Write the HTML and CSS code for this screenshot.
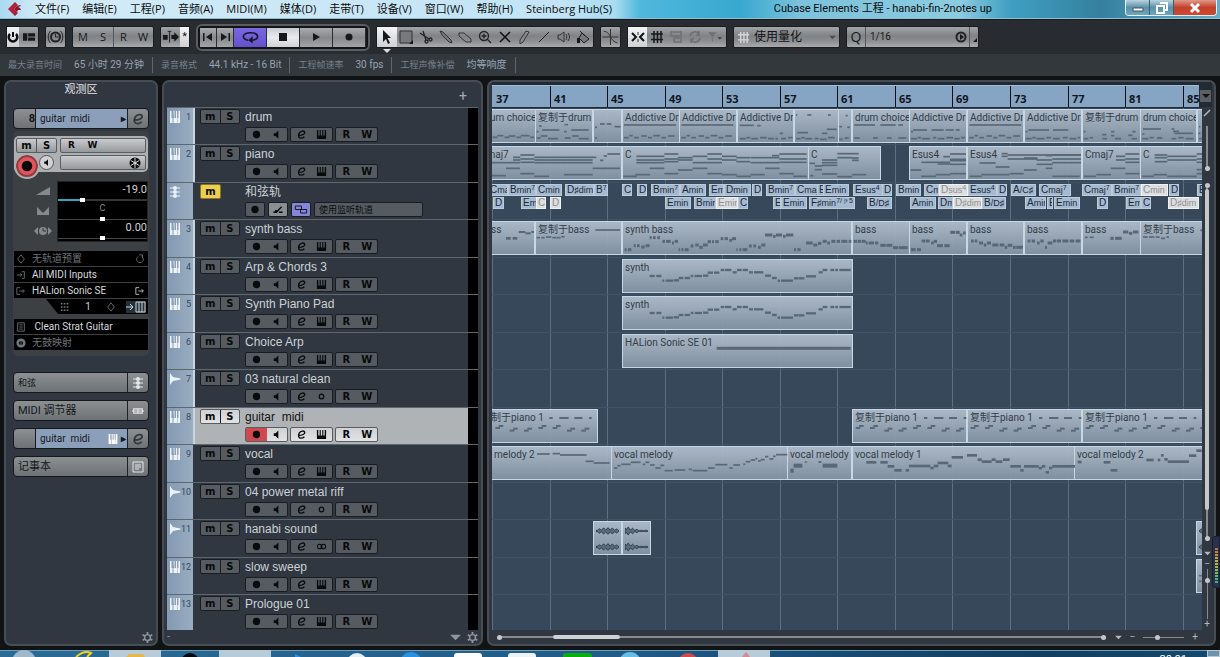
FILE: index.html
```html
<!DOCTYPE html>
<html lang="zh-CN">
<head>
<meta charset="utf-8">
<title>Cubase Elements 工程 - hanabi-fin-2notes up</title>
<link rel="stylesheet" href="styles.css">
</head>
<body>
<svg class="defs" aria-hidden="true">
  <symbol id="rec" viewBox="0 0 12 12"><circle cx="6" cy="6" r="4"/></symbol>
  <symbol id="mon" viewBox="0 0 12 12"><path d="M3 4.500h2L8 1.500v9L5 7.500H3z"/></symbol>
  <symbol id="edit" viewBox="0 0 12 12"><path d="M2.500 7C7 7 10 5.500 9.500 3.500 9 1.500 5 2 3.500 4.500 2 7.500 3 10 5.500 10c1.500 0 2.700-.6 3.700-1.500" fill="none" stroke="currentColor" stroke-width="1.500"/></symbol>
  <symbol id="keys" viewBox="0 0 12 12"><path d="M1 1v10h10V1H9.500v6H8V1H6.800v6H5.200V1H4v6H2.500V1z"/></symbol>
  <symbol id="piano" viewBox="0 0 12 12"><path d="M1 0h1.500v7h1v5H1zM4.500 0h1v7h.5V7h1V0h1v7h.5v5h-4V7h.5zM9.500 0H11v12H9V7h.5z"/></symbol>
  <symbol id="wave" viewBox="0 0 12 12"><path d="M1 0l3 4 7.500 1.500v1L4 8l-3 4z"/></symbol>
  <symbol id="mono" viewBox="0 0 12 12"><circle cx="6" cy="6" r="2.500" fill="none" stroke="currentColor" stroke-width="1.300"/></symbol>
  <symbol id="stereo" viewBox="0 0 12 12"><g fill="none" stroke="currentColor" stroke-width="1.200"><circle cx="4" cy="6" r="2.500"/><circle cx="8" cy="6" r="2.500"/></g></symbol>
  <symbol id="chord" viewBox="0 0 12 12"><path d="M1 2h10M1 6h10M1 10h10" stroke="currentColor" fill="none"/><circle cx="6" cy="2" r="2"/><circle cx="6" cy="6" r="2"/><circle cx="6" cy="10" r="2"/></symbol>
  <symbol id="voice" viewBox="0 0 12 12"><path d="M1 9h3l6-6M7 9h4" stroke="currentColor" fill="none" stroke-width="1.400"/><circle cx="4" cy="8" r="1.500"/></symbol>
  <symbol id="link" viewBox="0 0 16 12"><path d="M1.500 2h7v4h-7zM7.500 6h7v4h-7z" stroke="currentColor" fill="none"/></symbol>
  <symbol id="gear" viewBox="0 0 12 12"><circle cx="6" cy="6" r="3.200" fill="none" stroke="currentColor" stroke-width="1.500"/><path d="M6 0v2.500M6 9.500V12M.8 3l2.200 1.300M9 7.700 11.200 9M.8 9 3 7.700M9 4.300 11.200 3" stroke="currentColor" stroke-width="2"/></symbol>
  <symbol id="down" viewBox="0 0 8 6"><path d="M0 1h8L4 5z"/></symbol>
  <symbol id="grid" viewBox="0 0 14 14"><path d="M1 4h12M1 9.500h12M4 1v12M7.500 1v12M11 1v12" stroke="currentColor" stroke-width="1.500" fill="none"/></symbol>
</svg>

<header class="titlebar">
  <nav class="menu" aria-label="主菜单">
    <svg class="logo" viewBox="0 0 14 14"><path d="M7 0 0 7l7 7 3-3-4-4 4-4z" fill="#b3203a"/><path d="m9 4-3 3 3 3 1-2h3l-1-2-2-1 3-1-1-1z" fill="#8c1830"/></svg>
    <a href="#file">文件(F)</a><a href="#edit">编辑(E)</a><a href="#project">工程(P)</a><a href="#audio">音频(A)</a><a href="#midi">MIDI(M)</a><a href="#media">媒体(D)</a><a href="#transport">走带(T)</a><a href="#devices">设备(V)</a><a href="#window">窗口(W)</a><a href="#help">帮助(H)</a><a href="#hub">Steinberg Hub(S)</a>
  </nav>
  <h1>Cubase Elements 工程 - hanabi-fin-2notes up</h1>
  <div class="winbtns">
    <button aria-label="最小化"><svg viewBox="0 0 14 12"><path d="M2 6h10v3H2z" fill="#fff" stroke="#456"/></svg></button>
    <button aria-label="还原"><svg viewBox="0 0 14 12"><path d="M5 1h7v7h-2M2 4h7v7H2z" fill="none" stroke="#fff" stroke-width="2"/></svg></button>
    <button class="close" aria-label="关闭"><svg viewBox="0 0 14 12"><path d="m3 2 8 8m0-8-8 8" stroke="#fff" stroke-width="3"/></svg></button>
  </div>
</header>

<div class="toolbar">
  <div class="group">
    <button class="w12 on" aria-label="激活工程"><svg viewBox="0 0 12 12"><path d="M3 3a4.300 4.300 0 1 0 6 0" fill="none" stroke="#111" stroke-width="2.500"/><path d="M6 1v5" stroke="#111" stroke-width="2"/></svg></button>
    <button class="w20" aria-label="窗口布局"><svg viewBox="0 0 14 12"><path d="M0 1.500h5v9H0zM6 1.500h8v4H6zM6 6.500h8v4H6z"/></svg></button>
  </div>
  <div class="group"><button class="w20" aria-label="延迟补偿"><svg class="big" viewBox="0 0 16 16"><g fill="none" stroke="#222"><circle cx="8" cy="8" r="4.500" stroke-width="2"/><path d="M8 5v3h3M3 2C0 5 0 11 3 14M13 2c3 3 3 9 0 12"/></g></svg></button></div>
  <div class="group letters"><button>M</button><button>S</button><button class="div">R</button><button>W</button></div>
  <div class="group">
    <button class="w20" aria-label="自动滚动"><svg class="big" viewBox="0 0 18 16"><path d="M1 6h5v5H1zM10 6h3V3l5 5-5 5v-3h-3z"/><path d="M8 2v12M6 2h4" stroke="#222" fill="none"/></svg></button>
    <button class="w8 on">*</button>
  </div>
  <div class="transport">
    <button class="w18" aria-label="上一个标记"><svg viewBox="0 0 12 12"><path d="M1 2h1.500v8H1zM10 2v8L4 6z"/></svg></button>
    <button class="w18" aria-label="下一个标记"><svg viewBox="0 0 12 12"><path d="M9.500 2H11v8H9.500zM2 2v8l6-4z"/></svg></button>
    <button class="cycle" aria-label="循环"><svg class="big" viewBox="0 0 16 14"><path d="M6 10C-1 9 0 3 8 3s9 6 2 7H8" fill="none" stroke="#191535" stroke-width="1.500"/><path d="m10 6-4 4 4 3z"/></svg></button>
    <button class="on" aria-label="停止"><svg viewBox="0 0 12 12"><path d="M2 2h8v8H2z"/></svg></button>
    <button aria-label="播放"><svg viewBox="0 0 12 12"><path d="M3 2v8l7-4z"/></svg></button>
    <button aria-label="录音"><svg viewBox="0 0 12 12"><circle cx="6" cy="6" r="3.500"/></svg></button>
  </div>
  <div class="group tools">
    <button class="on" aria-label="对象选择"><svg viewBox="0 0 14 14"><path d="m3 0 8 8H7.500L10 13l-2 1-2-5-3 3z"/></svg><i></i></button>
    <button aria-label="范围选择"><svg viewBox="0 0 14 14"><path d="M1 1h12v12H1z" fill="#77797c" stroke="#333"/><path d="M14 10v4h-4z"/></svg></button>
    <button aria-label="分割"><svg viewBox="0 0 14 14"><g fill="none" stroke="#222" stroke-width="1.300"><path d="m1 3 9 6M4 1l3 9"/><circle cx="7.500" cy="11.500" r="1.500"/><circle cx="11.500" cy="9.500" r="1.500"/></g></svg></button>
    <button aria-label="胶合"><svg viewBox="0 0 14 14"><path d="m1 1 3 1 8 8 1 3-3-1-7-7z" fill="#777" stroke="#333"/></svg></button>
    <button aria-label="擦除"><svg viewBox="0 0 14 14"><path d="M1 3h5l7 6v3H8L1 6z" fill="none" stroke="#333"/></svg></button>
    <button aria-label="缩放"><svg viewBox="0 0 14 14"><g fill="none" stroke="#222" stroke-width="1.300"><circle cx="6" cy="6" r="4.500"/><path d="M3.500 6h5M6 3.500v5M9 9l4 4"/></g></svg></button>
    <button aria-label="静音"><svg viewBox="0 0 14 14"><path d="m2 2 10 10m0-10L2 12" stroke="#111" stroke-width="1.500"/></svg></button>
    <button aria-label="绘制"><svg viewBox="0 0 14 14"><path d="m9 1 3 1-6 10-3 2V10z" fill="none" stroke="#333"/></svg></button>
    <button aria-label="直线"><svg viewBox="0 0 14 14"><path d="M2 12 12 2" stroke="#222"/></svg></button>
    <button aria-label="播放工具"><svg viewBox="0 0 14 14"><g fill="none" stroke="#333"><path d="M1 5h2l4-3v10L3 9H1zM9 4c1 2 1 4 0 6M11 3c2 3 2 5 0 8"/></g></svg></button>
    <button aria-label="颜色"><svg viewBox="0 0 14 14"><path d="m6 3 7 6-5 4-5-5zM4 1l5 5" fill="#777" stroke="#222"/><path d="M1 8h3v5H1z"/></svg></button>
  </div>
  <div class="group"><button class="w20" aria-label="吸附到零交叉"><svg class="big" viewBox="0 0 16 16"><path d="M8 0v16M0 8h16M1 2c5 1 6 4 7 6s3 5 7 6" fill="none" stroke="#333"/></svg></button></div>
  <div class="group snap">
    <button class="on" aria-label="吸附"><svg viewBox="0 0 14 14"><path d="m1 3 4 4-4 4M13 3 9 7l4 4" fill="none" stroke="#111" stroke-width="2"/><path d="M7 2v3m0 4v3" stroke="#333"/></svg></button>
    <button aria-label="网格"><svg><use href="#grid"/></svg></button>
    <button class="dim" aria-label="事件吸附"><svg viewBox="0 0 14 14"><path d="M2 2h10v4H2zM5 8h7v4H5z" fill="none" stroke="currentColor" stroke-width="1.500"/></svg></button>
    <button class="dim" aria-label="洗牌"><svg viewBox="0 0 14 14"><path d="M2 6a5 5 0 0 1 9-2M12 8a5 5 0 0 1-9 2M11 1v4H8M3 13V9h3" fill="none" stroke="currentColor" stroke-width="1.500"/></svg></button>
    <button class="dim" aria-label="吸附类型"><svg viewBox="0 0 16 14"><path d="M1 2h8L5 6zM5 4v8" stroke="currentColor"/><path d="M11 7h5l-2.500 3z" fill="#444"/></svg></button>
  </div>
  <div class="group quant">
    <svg class="gridico"><use href="#grid"/></svg>
    <select aria-label="网格类型"><option>使用量化</option></select>
    <svg class="arrow"><use href="#down"/></svg>
  </div>
  <div class="group q">
    <label for="quantize">Q</label>
    <select id="quantize"><option>1/16</option></select>
    <button class="w18" aria-label="应用量化"><svg viewBox="0 0 12 12"><circle cx="6" cy="6" r="4.500" fill="none" stroke="#222" stroke-width="2"/><path d="M5 3v6l4-3z"/></svg></button>
    <button class="w8 div" aria-label="量化面板"><svg viewBox="0 0 8 12"><path d="M7 7v4H3z"/></svg></button>
  </div>
</div>

<dl class="info">
  <div><dt>最大录音时间</dt><dd>65 小时 29 分钟</dd></div>
  <div><dt>录音格式</dt><dd>44.1 kHz - 16 Bit</dd></div>
  <div><dt>工程帧速率</dt><dd>30 fps</dd></div>
  <div><dt>工程声像补偿</dt><dd>均等响度</dd></div>
</dl>

<main class="work">
  <aside class="panel inspector">
    <h2>观测区</h2>
    <div class="bar track">
      <span class="num">8</span><button class="name">guitar&nbsp; midi<b>▸</b></button><button class="end" aria-label="编辑"><svg><use href="#edit"/></svg></button>
    </div>
    <section class="channel">
      <div class="strip">
        <div class="ms"><button>m</button><button>S</button></div>
        <div class="rw"><button>R</button><button>W</button></div>
        <div class="round"><button class="record" aria-label="录音启用"><svg><use href="#rec"/></svg></button><button class="monitor" aria-label="监听"><svg><use href="#mon"/></svg></button></div>
        <div class="rw freeze"><button aria-label="冻结"><svg viewBox="0 0 12 12"><circle cx="6" cy="6" r="5.500"/><path d="M6 1v10M1.700 3.500l8.600 5M1.700 8.500l8.600-5" stroke="#ccc"/><circle cx="6" cy="6" r="1.500" fill="#ccc"/></svg></button></div>
      </div>
      <div class="faders">
        <div class="labels">
          <svg viewBox="0 0 18 12"><path d="M2 10 16 2v8z"/></svg>
          <svg viewBox="0 0 18 12"><path d="M3 2l6 6 6-6v8H3z"/></svg>
          <svg viewBox="0 0 18 12"><path d="M4 2v8L0 6zM14 2v8l4-4z"/><circle cx="9" cy="6" r="4"/><path d="M9 3v3h3" stroke="#333" fill="none"/></svg>
        </div>
        <div class="values">
          <label>-19.0<input class="vol" type="range" value="26" aria-label="音量"></label>
          <label class="pan">C<input type="range" value="50" aria-label="声像"></label>
          <label>0.00<input type="range" value="50" aria-label="延迟"></label>
        </div>
      </div>
      <ul class="routes">
        <li class="off"><svg viewBox="0 0 12 12"><path d="m6 1 4 5-4 5-4-5z"/></svg><span>无轨道预置</span><svg viewBox="0 0 12 12"><path d="M8 3a4 4 0 1 1-4 0M5 1h4v4"/></svg></li>
        <li><svg viewBox="0 0 12 12"><path d="M1 6h6M5 4l2 2-2 2M7 2h3v8H7"/></svg><span>All MIDI Inputs</span></li>
        <li><svg viewBox="0 0 12 12"><path d="M5 2H1v8h4M4 6h6M8 4l2 2-2 2"/></svg><span>HALion Sonic SE</span><svg class="lit" viewBox="0 0 12 12"><path d="M5 2H1v8h4M4 6h6M8 4l2 2-2 2"/></svg></li>
      </ul>
      <div class="midich"><svg viewBox="0 0 12 12"><path d="M1 2h9M1 6h9M1 10h9" stroke-dasharray="2 1.500" stroke-width="1.800"/></svg><span>1</span><svg viewBox="0 0 12 12"><path d="m6 1 4 5-4 5-4-5z"/></svg><svg class="lit wide" viewBox="0 0 20 12"><path d="M0 6h6M4 3l3 3-3 3M10 1h9v10h-9zM13 1v10M16 1v10"/></svg></div>
      <ul class="routes">
        <li><svg viewBox="0 0 12 12"><path d="M2 1h8v10H2zM4 3.500h4M4 6h4M4 8.500h4"/></svg><span>&nbsp;Clean Strat Guitar</span></li>
        <li class="off"><svg viewBox="0 0 12 12"><circle cx="6" cy="6" r="4" stroke-width="3"/><path d="M6 3v7"/></svg><span>无鼓映射</span></li>
      </ul>
    </section>
    <div class="bar"><button class="title small">和弦</button><button class="end white" aria-label="和弦"><svg><use href="#chord"/></svg></button></div>
    <div class="bar"><button class="title">MIDI 调节器</button><button class="end white" aria-label="调节器"><svg viewBox="0 0 14 12"><path d="M0 6h14M2 3.500h10v5H2zM7 3.500v5" fill="none" stroke="currentColor" stroke-width="1.300"/></svg></button></div>
    <div class="bar track"><span class="num"></span><button class="name">guitar&nbsp; midi<svg class="mini"><use href="#piano"/></svg><b>▸</b></button><button class="end" aria-label="编辑"><svg><use href="#edit"/></svg></button></div>
    <div class="bar"><button class="title">记事本</button><button class="end white" aria-label="记事本"><svg viewBox="0 0 12 12"><path d="M1 1h10v10H1zM3 4h6M3 6h6M3 8h4" fill="none" stroke="currentColor"/></svg></button></div>
    <footer><button aria-label="设置"><svg><use href="#gear"/></svg></button></footer>
  </aside>

  <section class="panel tracks" aria-label="轨道列表">
    <div class="head"><button aria-label="添加轨道">+</button></div>
    <div class="rows" id="rows"></div>
    <footer><span>-</span><button aria-label="缩放"><svg class="tri"><use href="#down"/></svg></button><button aria-label="设置"><svg><use href="#gear"/></svg></button></footer>
  </section>

  <section class="panel arrange" aria-label="工程窗口">
    <div class="ruler"><div class="bars" id="bars"></div><button aria-label="标尺选项"><svg><use href="#down"/></svg></button></div>
    <div class="canvas"><div class="lines" id="lines"></div><div id="lanes"></div></div>
    <div class="vscroll">
      <svg class="slash" viewBox="0 0 8 8"><path d="M1 7 7 1" stroke="currentColor" stroke-width="1.500"/></svg>
      <div class="vsplit"></div>
      <div class="vbar"><i></i></div>
      <svg class="tri"><use href="#down"/></svg>
      <span>−</span>
      <input type="range" value="20" aria-label="垂直缩放">
      <span>+</span>
    </div>
    <div class="hscroll">
      <div class="hbar"><i></i></div>
      <svg class="tri"><use href="#down"/></svg>
      <span>−</span><input type="range" value="32" aria-label="水平缩放"><span>+</span>
    </div>
  </section>
  <div class="meter" aria-hidden="true"><i></i></div>
</main>

<footer class="taskbar">
  <svg viewBox="0 0 780 7" aria-hidden="true">
    <circle cx="24" cy="12" r="12" fill="#9fb9cc"/><path d="M76 7q8-7 15-4l-4 4" fill="none" stroke="#f0d020" stroke-width="2"/>
    <path d="M109 0h52v7h-52zM219 0h52v7h-52zM718 0h52v7h-52z" fill="#b8cbd9"/><path d="M126 7l3-3h14l2 3z" fill="#e5b64a"/>
    <circle cx="190" cy="12" r="9" fill="#05080c"/><path d="m295 4 6 3h-6z" fill="#2c8fe8"/><circle cx="357" cy="13" r="10" fill="#e8f0f5"/><circle cx="411" cy="13" r="11" fill="#2a90e0"/>
    <rect x="454" y="3" width="28" height="8" rx="3" fill="#fff"/><rect x="508" y="3" width="28" height="8" rx="3" fill="#eef3f6"/><rect x="563" y="3" width="29" height="8" rx="3" fill="#0aae0a"/>
    <circle cx="630" cy="13" r="11" fill="#67bfe6"/><circle cx="688" cy="13" r="10" fill="#d04a4a"/><path d="m742 7 4-5 4 5z" fill="#d58a90"/>
  </svg>
  <time>20:01</time><button aria-label="显示桌面"></button>
</footer>
<script src="app.js"></script>
</body>
</html>
```

FILE: styles.css
```css
* { box-sizing: border-box; }
body {
  margin: 0;
  min-height: 100vh;
  display: flex;
  flex-direction: column;
  overflow: hidden;
  background: #111315;
  color: #c9d0d6;
  font: 11px/14px Roboto, "Noto Sans CJK SC", sans-serif;
}
button, select, input { font: inherit; color: inherit; margin: 0; padding: 0; border: 0; background: none; min-width: 0; }
button { display: flex; align-items: center; justify-content: center; }
ul, dl, dd, h1, h2 { margin: 0; padding: 0; }
ul { list-style: none; }
a { color: inherit; text-decoration: none; }
svg { width: 12px; height: 12px; fill: currentColor; flex: none; display: block; }
.defs { position: absolute; width: 0; height: 0; }

/* title bar */
.titlebar {
  display: flex;
  height: 19px;
  align-items: center;
  background: linear-gradient(to right, #a9daf2 0, #d3ebf7 40px, #c2e4f6 560px, #a8dcf0 615px, #4fb8dc 640px, #37a8cf 740px, #7cc2dc 800px, #8ccce0 960px, #3f9fc2 1010px, #35809e 1100px, #64aecb);
  border-bottom: 1px solid #8ebdd0;
  color: #0c0c0c;
  font: 11px/18px "Open Sans", "Noto Sans CJK SC", sans-serif;
}
.menu { display: flex; align-items: center; gap: 13px; padding-left: 8px; flex: 1; white-space: nowrap; }
.logo { width: 14px; height: 14px; }
.titlebar h1 { font: 11px/18px Roboto, "Noto Sans CJK SC", sans-serif; margin-right: 133px; white-space: nowrap; }
.winbtns { display: flex; align-self: flex-start; margin-right: 3px; border: 1px solid #e5f1f6; border-top: 0; border-radius: 0 0 4px 4px; overflow: hidden; }
.winbtns button { width: 24px; height: 15px; background: linear-gradient(#b8d4e0, #5d8fa9 50%, #6fa6bf); border-right: 1px solid #37606f; }
.winbtns svg { width: 14px; }
.winbtns .close { width: 42px; border: 0; background: linear-gradient(#e09a88, #c4402c 50%, #d0492e); }

/* toolbar */
.toolbar { display: flex; align-items: center; height: 35px; padding: 0 6px; gap: 6px; background: #282b2f; color: #16181a; border-top: 1px solid #1b1d20; }
.group { display: flex; height: 22px; background: linear-gradient(#a2a4a7, #808386 45%, #8c8f92 70%, #a8aaac); border: 1px solid #1a1c1e; border-radius: 2px; }
.w8 { width: 9px; } .w12 { width: 12px; } .w18 { width: 17px; } .w20 { width: 19px; }
.on { background: linear-gradient(#f4f4f6, #d0d1d4); }
.big { width: 17px; height: 16px; }
.letters button { width: 20px; font: 11px/20px "Open Sans", sans-serif; }
.div { border-left: 1px solid #55585b; }
.transport { display: flex; height: 27px; padding: 2px; border: 2px solid #5a5d61; border-radius: 6px; background: #131416; }
.transport button { width: 33px; background: linear-gradient(#a9abae, #86898c 50%, #a2a4a7); border-right: 1px solid #2b2d30; }
.transport .w18 { width: 17px; }
.transport .cycle { background: linear-gradient(#7a68e0, #6450cc); }
.transport .on { background: linear-gradient(#c8ccd2, #e8eaee 50%, #cfd2d8); }
.tools { width: 218px; }
.tools button { flex: 1; position: relative; }
.snap button { width: 19px; }
.tools svg, .snap svg { width: 14px; height: 14px; }
.tools i { position: absolute; top: 22px; left: 6px; border: 4px solid transparent; border-top-color: #ddd; border-bottom: 0; }
.snap button:last-child { width: 22px; }
.snap .dim { color: #6d7073; }
.quant { width: 107px; align-items: center; padding: 0 3px; gap: 4px; }
.gridico { color: #d5d8db; width: 13px; height: 13px; }
select { appearance: none; flex: 1; }
.quant select { font-size: 12px; color: #111; }
.arrow { width: 7px; height: 5px; color: #4b4e51; }
.q { width: 133px; }
.q label { width: 19px; font: 14px/20px "Open Sans", sans-serif; text-align: center; border-right: 1px solid #55585b; }
.q select { padding-left: 4px; font: 10px/20px Roboto, sans-serif; }

.info { display: flex; height: 22px; align-items: center; background: #33383c; color: #95a3b3; }
.info div { display: flex; align-items: center; gap: 12px; padding: 0 8px; border-right: 1px solid #5d6770; height: 16px; }
.info dt { font-size: 9px; color: #75828f; }
.info dd { font-size: 10px; }

/* panels */
.work { position: relative; flex: 1; display: flex; gap: 4px; padding: 4px; }
.panel { background: #303740; border: 2px solid #474d54; border-radius: 7px; display: flex; flex-direction: column; }
.panel footer { margin-top: auto; height: 14px; display: flex; align-items: center; justify-content: flex-end; gap: 6px; color: #8e959c; }
.panel footer svg { width: 11px; height: 11px; }

.inspector { width: 154px; padding: 0 7px; }
.inspector footer { margin-right: -4px; }
.inspector h2 { font-size: 11px; font-weight: 400; line-height: 16px; text-align: center; color: #e0e3e6; margin-bottom: 10px; }
.bar { display: flex; height: 21px; margin-top: 7px; border: 1px solid #16181a; border-radius: 4px; overflow: hidden; background: linear-gradient(#8d9093, #6e7275); color: #15181b; }
.bar:nth-of-type(1) { margin-top: 0; }
.title { flex: 1; justify-content: flex-start; padding-left: 4px; font-size: 11px; }
.title.small { font-size: 9px; }
.num { width: 21px; text-align: right; font-weight: 700; line-height: 19px; }
.name { flex: 1; justify-content: flex-start; padding-left: 4px; background: #8b9fba; border-left: 1px solid #16181a; font-size: 10px; }
.name b { margin-left: auto; padding-right: 1px; }
.name .mini { margin-left: auto; color: #fff; background: #adbac9; width: 10px; height: 10px; }
.name .mini + b { margin-left: 3px; }
.end { width: 21px; border-left: 1px solid #1f2225; color: #33373b; }
.end svg { width: 14px; height: 14px; }
.end.white { color: #e4e6e8; }
.end.white svg { width: 12px; height: 12px; }

.channel { margin: 2px 0 9px; padding: 5px 1px; background: #3c4043; border-radius: 5px; }
.strip { display: grid; grid-template-columns: 41px 1fr; gap: 2px 3px; padding: 2px; background: #adb0b3; border-radius: 5px; color: #0a0a0a; height: 36px; }
.strip .ms, .strip .rw { display: flex; height: 15px; border: 1px solid #5b5e61; border-radius: 2px; background: linear-gradient(#c9cbce, #96999c); }
.ms button { flex: 1; font: 700 10px/13px "DejaVu Sans", sans-serif; }
.ms button + button { border-left: 1px solid #555; }
.rw button { width: 21px; font: 700 9px/13px "DejaVu Sans", sans-serif; }
.strip .freeze { justify-content: flex-end; }
.round { display: flex; align-items: flex-start; gap: 1px; }
.record, .monitor { border-radius: 50%; flex: none; }
.record { width: 22px; height: 22px; background: #df565e; border: 2px solid #96383d; outline: 2px solid #adb0b3; }
.record svg { width: 16px; height: 16px; }
.monitor { width: 15px; height: 15px; background: #d0d2d4; border: 1px solid #555; }
.monitor svg { width: 9px; height: 9px; }
.faders { display: flex; margin-top: 9px; padding-left: 20px; }
.labels { display: flex; flex-direction: column; gap: 8px; padding-top: 4px; width: 23px; color: #85898c; }
.labels svg { width: 18px; }
.values { flex: 1; background: #000; border: 1px solid #222; padding-bottom: 2px; }
.values label { display: block; height: 19px; text-align: right; color: #d0d3d6; line-height: 15px; }
.values .pan { text-align: center; color: #858a8e; font-size: 9px; }
input[type=range] { appearance: none; display: block; height: 4px; background: linear-gradient(#444, #444) center / 100% 1px no-repeat; }
input[type=range]::-webkit-slider-thumb { appearance: none; width: 5px; height: 4px; background: #fff; }
.values input { width: 100%; margin-top: 1px; }
.values .vol { background: linear-gradient(to right, #2fa6c0 26%, #333 26%) center / 100% 2px no-repeat; }
.routes { margin-top: 9px; }
.routes li { display: flex; align-items: center; gap: 6px; height: 15px; margin-bottom: 1px; padding: 0 3px 0 2px; background: #000; color: #d6d9dc; font-size: 10px; }
.routes span { flex: 1; }
.routes .off { color: #6e7377; }
.routes svg, .midich svg { width: 10px; height: 10px; fill: none; stroke: #74797d; }
.routes .lit, .midich .lit { stroke: #ccd5da; }
.midich { display: flex; align-items: center; gap: 10px; height: 15px; margin-left: 32px; padding: 0 2px 0 14px; background: #000; clip-path: polygon(0 0, 100% 0, 100% 100%, 12px 100%); font-size: 10px; }
.midich span { flex: 1; text-align: center; }
.midich .wide { width: 20px; height: 12px; background: #22313a; }
.midich + .routes { margin-top: 5px; }

/* track list */
.tracks { width: 321px; padding: 0 3px; }
.head { height: 25px; padding: 5px 11px 0; display: flex; justify-content: flex-end; }
.head button { font-size: 14px; color: #a5abb1; height: 18px; }
.rows { height: 523px; overflow: hidden; }
.row, .lane { height: 37px; }
.row:nth-child(even), .lane:nth-child(even) { height: 38px; }
.row { display: grid; grid-template-columns: 26px 2px 5px 45px 1fr 10px; border-top: 1px solid #5d6770; color: #ccd1d6; }
.tag { display: flex; justify-content: space-between; padding: 3px 2px 0; background: linear-gradient(to right, #8299b2, #9aadc1); color: #35485c; font-size: 9px; line-height: 12px; }
.tag svg { color: #edf2f7; }
.edge.lit { background: #c9d6e2; }
.level { grid-column: 6; background: #000; }
.btns { display: flex; border: 1px solid #191d21; border-radius: 2px; background: #555b61; color: #090a0b; height: 15px; }
.btns button { flex: 1; height: 13px; font: 700 10px/12px "DejaVu Sans", sans-serif; }
.btns svg { width: 11px; height: 11px; }
.mute { width: 40px; margin-top: 1px; }
.mute button + button { border-left: 1px solid #191d21; }
.row.chordtrack .mute { width: 21px; background: #ecce50; border-color: #8b752a; }
.track-name { font: 12px/18px "Liberation Sans", "Noto Sans CJK SC", sans-serif; height: 19px; }
.controls { display: flex; gap: 2px; }
.controls .btns { width: 43px; }
.controls .one { width: 20px; margin-right: 1px; }
.controls .grey { background: #8b8e91; }
.controls .violet { background: #8686d8; }
.controls .one svg { width: 14px; }
.controls .mapping { width: 109px; padding-left: 4px; justify-content: flex-start; font: 9px/13px "Noto Sans CJK SC", sans-serif; }
.row.selected { background: #b0b3b6; color: #141414; }
.selected .btns { background: linear-gradient(#cfd1d4, #e2e3e5); border-color: #5a5c5e; }
.selected .armed { background: #d24850; }
.tracks footer span { margin-right: auto; }

/* arrangement */
.arrange { flex: 1; display: grid; grid-template: 25px 523px 14px / minmax(0, 1fr) 12px; padding-left: 3px; overflow: hidden; }
.ruler { grid-column: 1 / 3; display: flex; padding-top: 3px; margin-right: 2px; background: #222a33; }
.bars { flex: 1; position: relative; overflow: hidden; background: #86a4c3; border-top: 1px solid #a5bbd0; color: #11161b; }
.bars span { position: absolute; top: 0; bottom: 0; padding: 6px 0 0 3px; border-left: 1px solid #0d1217; font: 700 11px/14px "Open Sans", sans-serif; }
.bars span:first-child { border: 0; padding-left: 4px; }
.ruler button { width: 11px; height: 12px; margin: 5px 1px; background: #5b6067; color: #111; }
.ruler button svg { width: 8px; height: 6px; }
.canvas { position: relative; overflow: hidden; background: #37485a; }
.lines i { position: absolute; top: 0; bottom: 0; width: 1px; background: #5d6f81; }
.lane { position: relative; border-top: 1px solid #405265; }
.lane:first-child { border-color: #222a33; }
.clip { position: absolute; top: 1px; height: 34px; overflow: hidden; padding: 1px 2px; white-space: nowrap; color: #333d47; border: 1px solid #c6d7e6; background: linear-gradient(rgb(174 187 202 / 96%), rgb(131 147 163 / 96%)); font: 10px/14px Roboto, "Noto Sans CJK SC", sans-serif; }
.clip svg { width: 100%; height: 30px; }
.notes { position: absolute; top: -1px; left: 0; width: 710px; height: 38px; pointer-events: none; fill: #596877; }
.ch { position: absolute; height: 12px; overflow: hidden; padding-left: 1px; white-space: nowrap; background: #a5bad0; border: 1px solid #bacbdc; color: #1d2936; font: 10px/10px "Liberation Sans", sans-serif; }
.ch small { font-size: 9px; }
.ch sup { font-size: 7px; line-height: 0; vertical-align: 3px; }
.ch.light { background: #dcdedf; border-color: #f0f1f2; color: #8d9092; }

.vscroll { display: flex; flex-direction: column; align-items: center; color: #b5b9bd; padding: 2px 2px 0 0; font-size: 10px; line-height: 10px; }
.slash { width: 8px; height: 8px; }
.vsplit { width: 2px; height: 45px; margin: 9px 0 14px; background: #868b90; position: relative; }
.vsplit::after, .vbar::before, .vbar::after, .hbar::before, .hbar::after { content: ""; position: absolute; width: 5px; height: 5px; border-radius: 50%; background: #c5c8cb; }
.vsplit::after { bottom: 0; left: -1px; }
.vbar { position: relative; width: 2px; height: 356px; background: #868b90; }
.vbar::before { top: -2px; left: -1px; }
.vbar::after { bottom: 0; left: -1px; }
.vbar i { position: absolute; top: 4px; left: -1px; width: 4px; height: 321px; border-radius: 2px; background: #c5c8cb; }
.tri { width: 7px; height: 5px; }
.vscroll .tri { margin: 10px 0 3px; }
.vscroll input { writing-mode: vertical-lr; width: 5px; height: 50px; background: linear-gradient(#868b90, #868b90) center / 1px 100% no-repeat; }
.vscroll input::-webkit-slider-thumb, .hscroll input::-webkit-slider-thumb { width: 5px; height: 5px; border-radius: 50%; background: #c5c8cb; }
.hscroll { grid-column: 1 / 3; display: flex; align-items: center; gap: 8px; padding: 0 16px 0 7px; color: #b5b9bd; font-size: 10px; }
.hbar { flex: 1; height: 2px; background: #868b90; position: relative; }
.hbar::before { left: -2px; top: -1px; }
.hbar::after { right: -2px; top: -1px; }
.hbar i { position: absolute; left: 9%; width: 11%; top: -1px; height: 4px; border-radius: 2px; background: #cfd1d3; }
.hscroll .tri { margin-left: 3px; }
.hscroll input { width: 41px; height: 5px; background: linear-gradient(#868b90, #868b90) center / 100% 1px no-repeat; }
.meter { position: absolute; right: 0; top: 460px; width: 8px; height: 52px; border: 1px solid #191f38; border-radius: 3px 0 0 3px; background: #293047; padding: 11px 1px 4px 2px; }
.meter i { display: block; height: 100%; background: repeating-linear-gradient(transparent 0 2px, #293047 2px 3px), linear-gradient(#b06a4a, #c8b040 35%, #80c058 65%, #30b090); }

.taskbar { display: flex; height: 7px; overflow: hidden; background: linear-gradient(to right, #2b6c94, #215b88 50%, #113e60 85%, #164a6c); box-shadow: inset 0 1px #6fa0bb; }
.taskbar svg { width: 780px; height: 7px; }
.taskbar time { margin-left: auto; padding: 3px 20px 0 0; color: #fff; font-size: 11px; line-height: 14px; }
.taskbar button { width: 13px; background: #6f93a8; border: 1px solid #b6cad6; }
```

FILE: app.js
```js
const use = id => `<svg><use href="#${id}"/></svg>`;
const btn = (inner, label = '', cls = '') => `<button class="${cls}"${label ? ` aria-label="${label}"` : ''}>${inner}</button>`;

// number, name, tag icon, channel icon, coloured edge
const tracks = [
  [1, 'drum', 'piano', 'keys', 1], [2, 'piano', 'piano', 'keys', 1], ['', '和弦轨', 'chord', '', 0],
  [3, 'synth bass', 'piano', 'keys', 1], [4, 'Arp &amp; Chords 3', 'piano', 'keys', 1],
  [5, 'Synth Piano Pad', 'piano', 'keys', 1], [6, 'Choice Arp', 'piano', 'keys', 1],
  [7, '03 natural clean', 'wave', 'mono', 1], [8, 'guitar&nbsp; midi', 'piano', 'keys', 1],
  [9, 'vocal', 'piano', 'keys', 0], [10, '04 power metal riff', 'wave', 'mono', 0],
  [11, 'hanabi sound', 'wave', 'stereo', 0], [12, 'slow sweep', 'piano', 'keys', 0], [13, 'Prologue 01', 'piano', 'keys', 0]
];
document.getElementById('rows').innerHTML = tracks.map(([n, name, tag, ch, lit]) => {
  const chord = tag === 'chord', sel = n === 8;
  const controls = chord
    ? `<div class="btns one">${btn(use('rec'), '录音')}</div><div class="btns one grey">${btn(use('voice'), '声部')}</div><div class="btns one violet">${btn(use('link'), '映射')}</div><button class="btns mapping">使用监听轨道</button>`
    : `<div class="btns">${btn(use('rec'), '录音', sel ? 'armed' : '')}${btn(use('mon'), '监听')}</div><div class="btns">${btn(use('edit'), '编辑')}${btn(use(ch), '通道')}</div><div class="btns">${btn('R')}${btn('W')}</div>`;
  return `<div class="row${sel ? ' selected' : ''}${chord ? ' chordtrack' : ''}"><div class="tag">${use(tag)}<span>${n}</span></div><div class="edge${lit ? ' lit' : ''}"></div><div></div>
    <div><div class="btns mute">${btn('m')}${chord ? '' : btn('S')}</div></div><div><div class="track-name">${name}</div><div class="controls">${controls}</div></div><div class="level"></div></div>`;
}).join('');

// Ruler: one label every four bars
const STEP = 57.55;
let bars = '', lines = '';
for (let i = 0; i < 13; i++) {
  const x = Math.round(i * STEP);
  bars += `<span style="left:${x}px">${37 + i * 4}</span>`;
  lines += `<i style="left:${x}px"></i>`;
}
document.getElementById('bars').innerHTML = bars;
document.getElementById('lines').innerHTML = lines;

// Times are in ticks, three to a pixel. L and R are the origins of the two halves of the song.
const L = -22, R = 1073;
const AD = 'Addictive Drums', P1 = '复制于piano 1';
const kit = x => `${x} 135 156,${x} 173 14,${x + 16} 167 10,${x + 30} 173 14,${x + 52} 168 16,${x + 72} 173 12,${x + 88} 167 20,${x + 112} 173 14,${x + 132} 168 20`;
const arp = '495 78 15,515 78 15,533 92 6,543 92 22,567 91 16,582 84 14,600 84 16,618 78 8,630 78 22,655 77 16,669 68 16,688 68 16,708 60 10,720 60 20,744 67 12,757 60 14,774 60 16,793 67 12,808 67 28,841 77 18,862 84 14,879 92 7,889 92 36,928 85 14,943 85 16,964 79 30,1002 67 12,1014 60 14,1037 60 12,1052 60 8,1064 60 34';
const riff = (x, n) => [
  ...Array.from({ length: n }, (_, i) => {
    const p = x + i * 43, low = i % 4 > 1 ? 8 : 0;
    return `${p} ${84 + low} 14,${p + 10} ${78 + low} 14`;
  }),
  `${x + 205} 54 10`, `${x + 235} 54 28`, `${x + 280} 54 24`, `${x + 324} 54 8`
].join(',');

const lanes = [
  { clips: [[L, -18, 151, 'drum choice'], [L, 154, 325, '复制于drum'], [L, 328, 411, ''], [L, 414, 583, AD], [L, 586, 757, AD], [L, 760, 926, AD], [L, 930, 1060, ''], [L, 1062, 1101, ''], [R, 9, 178, 'drum choice'], [R, 181, 351, AD], [R, 354, 522, AD], [R, 525, 695, AD], [R, 698, 870, '复制于drum'], [R, 873, 1041, 'drum choice'], [R, 1044, 1200, '']],
    notes: [[L, 81, '24 172 14,38 167 18,60 172 14,72 168 20,95 172 14,108 167 26,136 172 12,163 138 8,156 155 6,172 150 52,156 174 12,168 168 20,190 176 30,240 134 10,238 155 8,260 150 52,240 174 18,262 168 20,282 176 30,331 142 6,346 132 14,366 132 14,390 140 18,331 174 6,' + kit(418) + ',' + kit(590) + ',765 136 42,818 137 10,765 176 18,785 173 12,800 176 20,826 173 20,850 176 18,885 160 10,872 176 8,890 176 14,910 173 14,934 105 4,968 105 12,1030 105 8,1026 148 30,938 158 32,1012 160 16,934 176 14,950 173 10,962 176 20,990 176 12,1006 178 20,1030 173 20,1083 107 6,1064 140 8,1088 142 8,1064 178 10,1080 174 12'],
      [R, 81, '14 135 62,92 135 46,146 135 14,14 174 16,70 174 14,112 174 14,146 174 24,184 155 6,190 150 42,246 150 36,288 150 24,318 150 12,184 176 18,204 173 10,216 176 24,250 173 10,264 176 20,290 173 20,314 176 16,334 173 12,' + kit(359) + ',528 155 6,536 150 62,610 150 46,528 176 18,548 173 10,560 176 24,590 173 14,610 176 20,640 173 14,660 176 20,684 173 8,702 155 6,784 155 10,848 155 10,702 176 14,720 173 10,758 164 12,758 176 14,784 167 10,796 176 18,836 166 12,846 176 16,880 147 54,878 162 6,966 147 8,970 154 18,974 160 56,878 176 18,900 173 12,922 174 16,966 176 14,986 173 16,1008 176 24,1048 140 4,1046 160 6,1048 176 8']] },
  { clips: [[L, -20, 411, 'Cmaj7'], [L, 414, 970, 'C'], [L, 973, 1188, 'C'], [R, 181, 351, 'Esus4'], [R, 354, 695, 'Esus4'], [R, 698, 870, 'Cmaj7'], [R, 873, 1200, 'C']],
    notes: [[L, 193, '21 249 85,85 233 22,85 241 22,107 226 42,107 238 42,107 248 42,149 233 186,149 241 90,149 249 90,238 241 86,238 249 86,64 266 42,22 288 42,107 282 42,149 290 44,238 285 86,324 266 82,346 242 10,357 229 10,368 223 38,455 230 84,455 241 84,455 249 84,539 223 42,539 238 42,539 246 42,580 234 44,580 241 44,624 230 44,624 249 88,668 223 44,668 238 44,712 230 44,712 241 44,755 234 42,755 246 42,798 234 86,798 249 86,862 228 22,884 223 82,884 238 82,884 248 82,416 290 40,452 285 44,495 266 44,539 282 42,580 271 44,624 266 44,668 282 44,712 285 44,755 290 44,798 285 42,841 266 44,884 282 44,926 290 40,975 251 16,990 259 24,990 270 22,1012 241 46,1012 249 46,1012 257 46,1058 222 44,1058 234 44,976 288 10,1012 283 46,1058 291 44,1102 222 20,1102 235 20,1102 242 20,1102 285 42'],
      [R, 193, '183 271 32,215 248 86,281 231 20,301 239 48,301 243 48,301 254 48,264 253 38,301 223 48,215 290 44,258 285 44,301 282 48,390 250 48,438 262 42,456 222 18,456 230 18,474 226 220,474 238 90,523 235 40,561 241 46,588 228 20,608 238 86,608 249 86,608 226 86,523 271 38,561 254 48,588 266 20,360 290 36,395 285 84,480 282 42,608 290 82,799 230 28,799 241 28,827 223 42,827 238 42,827 248 42,783 266 44,740 285 44,827 282 42,703 290 36,915 226 38,915 234 38,915 246 38,953 230 88,953 241 88,1041 223 16,1041 238 16,1041 248 16,878 290 34,912 285 40,953 290 88,1041 270 16,1041 282 16']] },
  { chords: [[L, 0, 10, 66, 'C|maj|7'], [L, 0, 69, 151, 'B|min|7'], [L, 0, 154, 230, 'C|min'], [L, 0, 241, 325, 'D|♯dim'], [L, 0, 329, 369, 'B||7'], [L, 0, 413, 441, 'C'], [L, 0, 456, 484, 'D'], [L, 0, 499, 583, 'B|min|7'], [L, 0, 586, 662, 'A|min'], [L, 0, 673, 715, 'E|min'], [L, 0, 717, 795, 'D|min'], [L, 0, 803, 830, 'D'], [L, 0, 845, 929, 'B|min|7'], [L, 0, 931, 997, 'C|maj|7'], [L, 0, 998, 1015, 'E'], [L, 0, 1016, 1092, 'E|min'],
      [L, 1, 24, 53, 'D'], [L, 1, 109, 153, 'E|min'], [L, 1, 154, 182, 'C', 1], [L, 1, 196, 226, 'D', 1], [L, 1, 541, 616, 'E|min'], [L, 1, 628, 692, 'B|min'], [L, 1, 693, 757, 'E|min', 1], [L, 1, 760, 788, 'C'], [L, 1, 865, 887, 'E'], [L, 1, 888, 963, 'E|min'], [L, 1, 972, 1107, 'F|♯min|7/♭5'],
      [R, 0, 9, 95, 'E|sus|4'], [R, 0, 97, 123, 'D'], [R, 0, 139, 212, 'B|min'], [R, 0, 223, 266, 'C|min'], [R, 0, 267, 352, 'D|sus|4', 1], [R, 0, 355, 439, 'E|sus|4'], [R, 0, 442, 469, 'D'], [R, 0, 483, 554, 'A|/C♯'], [R, 0, 569, 661, 'C|maj|7'], [R, 0, 698, 785, 'C|maj|7'], [R, 0, 787, 871, 'B|min|7'], [R, 0, 873, 950, 'C|min', 1], [R, 0, 959, 986, 'D'], [R, 0, 1043, 1080, 'E'],
      [R, 1, 51, 123, 'B|/D♯'], [R, 1, 181, 257, 'A|min'], [R, 1, 265, 307, 'D|min'], [R, 1, 310, 393, 'D|♯dim', 1], [R, 1, 398, 467, 'B|/D♯'], [R, 1, 526, 587, 'A|min'], [R, 1, 593, 609, 'E'], [R, 1, 612, 687, 'E|min'], [R, 1, 742, 772, 'D'], [R, 1, 829, 872, 'E|min'], [R, 1, 874, 902, 'C'], [R, 1, 956, 1047, 'D|♯dim', 1]] },
  { clips: [[L, -20, 151, 'bass'], [L, 154, 411, '复制于bass'], [L, 414, 1101, 'synth bass'], [R, 9, 178, 'bass'], [R, 181, 351, 'bass'], [R, 354, 522, 'bass'], [R, 525, 695, 'bass'], [R, 698, 870, 'bass'], [R, 873, 1200, '复制于bass']],
    notes: [[L, 418, '64 476 14 8,84 476 14 8,102 457 20 6,122 461 16 6,140 457 8 6,156 474 10,170 474 10,184 472 16,203 474 12,216 474 12,230 471 10,332 451 74'],
      [L, 418, '420 510 6,430 510 10,447 498 6,457 498 8,470 502 10,483 498 12,495 474 6,505 474 8,518 474 8,533 485 8,544 485 14,562 490 6,570 485 10,582 510 4,590 510 6,600 510 12,618 499 8,632 496 10,644 503 10,655 496 14,669 486 10,682 486 6,692 486 10,708 477 8,720 477 10,734 482 8,742 477 12,755 510 4,764 510 6,774 510 14,793 499 8,806 499 8,820 503 8,830 496 12,841 466 22,865 470 8,874 466 18,895 470 8,904 466 22,928 510 6,938 510 10,964 490 20,986 496 12,1000 491 10,1014 485 12,1028 490 8,1040 485 12,1056 485 10,1070 485 18,1092 485 8', 9],
      [R, 418, '12 485 10,24 485 10,36 485 12,48 490 6,57 490 16,76 490 10,92 497 16,110 497 18,130 504 16,148 504 26,184 510 14,202 510 12,216 484 10,228 484 12,244 490 8,252 485 10,262 498 18,284 498 16,302 458 14,318 458 12,330 466 8,340 460 8,364 484 8,375 484 8,388 490 12,402 496 8,412 490 12,428 496 18,450 496 14,465 503 8,474 497 14,490 503 8,500 503 20,534 484 8,546 484 10,562 490 8,572 484 10,586 503 6,594 490 14,610 484 10,622 484 12,638 484 18,660 484 14,678 484 14,782 476 10,796 476 20,820 457 16,838 461 10,850 457 16', 9],
      [R, 418, '706 473 8,720 473 12,880 472 14,898 472 16,918 472 12,934 476 12,950 472 8,1052 452 5']] },
  { clips: [[L, 414, 1102, 'synth']], notes: [[L, 21, arp, 7]] },
  { clips: [[L, 414, 1102, 'synth']], notes: [[L, 21, arp, 7]] },
  { clips: [[L, 414, 1102, 'HALion Sonic SE 01']], notes: [[L, 246, '696 295 402', 9]] },
  {},
  { clips: [[L, -19, 336, P1], [R, 9, 351, P1], [R, 354, 695, P1], [R, 698, 1200, P1]],
    notes: [[L, 21, riff(-11, 8), 6], [R, 21, riff(18, 8), 6], [R, 21, riff(363, 8), 6], [R, 21, riff(708, 9), 6]] },
  { clips: [[L, -58, 378, 'vocal melody 2'], [L, 381, 907, 'vocal melody'], [L, 909, 1101, 'vocal melody'], [R, 9, 674, 'vocal melody 1'], [R, 676, 1200, 'vocal melody 2']],
    notes: [[L, 584, '157 614 38,204 613 22,226 617 80,303 636 24,327 641 48,388 656 10,398 649 10,410 645 28,438 639 30,474 645 8,482 639 12,496 647 14,512 656 16,527 648 12,540 664 24,570 662 32,612 660 10,624 664 44,670 656 20,692 646 36,734 656 10,746 647 20,776 645 6,783 637 14,798 632 14,812 628 6,820 635 8,828 631 12,841 622 10,854 629 12,865 621 8,874 616 34'],
      [L, 584, '917 664 10 12,927 649 26 12,960 638 8 4,1002 638 8 6,1014 649 44 12'],
      [R, 134, '50 189 30,92 189 22,114 201 20,134 213 22,168 213 10,178 200 64,242 206 10,252 200 14,264 191 32,294 200 12,306 174 34,352 168 30,384 181 12,396 187 30,426 181 12,438 187 20,460 181 20,482 201 32,512 213 10,523 201 44,567 206 10,577 201 10,588 219 10,598 206 10,608 201 68,684 188 12,762 189 20,783 213 20,890 182 22,924 182 8,934 168 8,944 180 10,954 187 64,1018 169 22,1040 154 16', 8]] },
  {},
  { clips: [[L, 326, 410, '~0'], [L, 413, 497, '~1'], [R, 1042, 1100, '~0']] },
  { clips: [[R, 1042, 1100, '']], notes: [[R, 471, '1048 527 8,1048 544 8']] },
  {}
];

// Stereo waveform outline; kind 1 decays from its attack
function waveform(kind) {
  return '<svg viewBox="0 0 84 90" preserveAspectRatio="none">' + [24, 72].map(mid => {
    const top = [], low = [];
    for (let x = 0; x <= 84; x += 3) {
      const base = kind ? Math.max(2, 13 - x / 5) : 4 + 5 * Math.sin(x / 84 * Math.PI);
      const a = base * (0.7 + 0.4 * Math.sin(x * 1.7));
      top.push(`${x},${mid - a}`); low.unshift(`${x},${mid + a}`);
    }
    return `<polygon points="${top.concat(low).join(' ')}" fill="#5a6c7e" stroke="#2c3946" stroke-width="3"/>`;
  }).join('') + '</svg>';
}

const box = (o, a, b) => `left:${Math.round((a + o) / 3)}px;width:${Math.round((b - a) / 3) + 1}px`;
document.getElementById('lanes').innerHTML = lanes.map(({ clips = [], notes = [], chords = [] }) => {
  const c = clips.map(([o, a, b, t]) => `<div class="clip" style="${box(o, a - 2, b - 1)}">${t[0] === '~' ? waveform(+t[1]) : t}</div>`).join('');
  const n = notes.map(([o, top, list, size = 5]) => list.split(',').map(s => {
    const [x, y, w, h = size] = s.split(' ').map(Number);
    return `<rect x="${x + o}" y="${y - top - h / 2}" width="${w}" height="${h}"/>`;
  }).join('')).join('');
  const k = chords.map(([o, r, a, b, t, light]) => {
    const [root, kind = '', sup = ''] = t.split('|');
    return `<span class="ch${light ? ' light' : ''}" style="${box(o, a, b)};top:${r ? 14 : 1}px">${root}${kind ? `<small>${kind}</small>` : ''}${sup ? `<sup>${sup}</sup>` : ''}</span>`;
  }).join('');
  return `<div class="lane">${c}${n ? `<svg class="notes" viewBox="0 0 2130 114">${n}</svg>` : ''}${k}</div>`;
}).join('');
```
